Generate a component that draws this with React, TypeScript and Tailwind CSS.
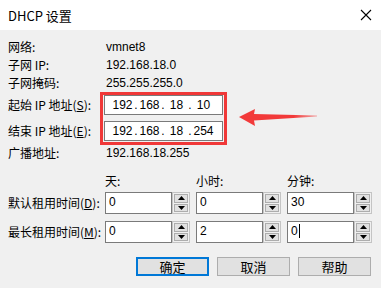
import React from "react";

const cjk = { fontFamily: '"Microsoft YaHei UI", "Noto Sans CJK SC", sans-serif' };
const num = { fontFamily: '"Liberation Sans", Arial, sans-serif' };

function Label({ children, h, className = "" }: { children: React.ReactNode; h: string; className?: string }) {
  return (
    <div className={`flex items-center ${h} ${className}`}>{children}</div>
  );
}

function IpInput({ parts }: { parts: string[] }) {
  return (
    <div className="flex h-[20px] w-[119px] items-center border border-[#7a7a7a] bg-white pl-[7px] text-[12px] text-black" style={num}>
      {parts.map((p, i) => (
        <React.Fragment key={i}>
          <span className="w-[21px] text-center">{p}</span>
          {i < parts.length - 1 && <span className="w-[6px] text-center">.</span>}
        </React.Fragment>
      ))}
    </div>
  );
}

function Spin({ value, caret = false }: { value: string; caret?: boolean }) {
  return (
    <div className="flex h-[22px] w-[85px]">
      <div className="flex h-full w-[67px] items-start border border-[#7a7a7a] bg-white pl-[3px] pt-[2px] text-[12px] leading-[14px] text-[#000]" style={num}>
        {value}
        {caret && <span className="ml-[1px] inline-block h-[14px] w-px bg-black" />}
      </div>
      <div className="flex h-full w-[18px] flex-col justify-center gap-[1px] border border-[#c4c4c4] bg-[#f0f0f0] px-[1px] py-[1px]">
        <div className="flex flex-1 items-center justify-center border border-[#adadad] bg-[#e1e1e1]">
          <svg width="7" height="4" viewBox="0 0 7 4"><path d="M0 4 L3.5 0 L7 4 Z" fill="#000" /></svg>
        </div>
        <div className="flex flex-1 items-center justify-center border border-[#adadad] bg-[#e1e1e1]">
          <svg width="7" height="4" viewBox="0 0 7 4"><path d="M0 0 L3.5 4 L7 0 Z" fill="#000" /></svg>
        </div>
      </div>
    </div>
  );
}

function Btn({ children, focus = false }: { children: React.ReactNode; focus?: boolean }) {
  return (
    <div
      className={`flex h-[19px] w-[73px] items-center justify-center bg-[#e1e1e1] text-[13px] text-black ${
        focus ? "border-2 border-[#0078d7]" : "border border-[#adadad]"
      }`}
      style={cjk}
    >
      {children}
    </div>
  );
}

export default function App() {
  return (
    <div className="relative h-[288px] w-[381px] overflow-hidden bg-[#f0f0f0] text-[12px] text-[#000]" style={cjk}>
      {/* title bar */}
      <div className="flex h-[30px] items-center justify-between bg-white pl-[8px] pr-[8px]">
        <span className="text-[13px] leading-none">DHCP 设置</span>
        <svg width="12" height="12" viewBox="0 0 12 12" className="mr-[1px]">
          <path d="M1 1 L11 11 M11 1 L1 11" stroke="#000" strokeWidth="1.1" />
        </svg>
      </div>

      <div className="flex flex-col pl-[8px] pt-[7px]">
        <div className="flex h-[19px] items-center">
          <span className="w-[98px]">网络:</span>
          <span style={num} className="text-[12px]">vmnet8</span>
        </div>
        <div className="flex h-[18px] items-center">
          <span className="w-[98px]">子网 IP:</span>
          <span style={num}>192.168.18.0</span>
        </div>
        <div className="flex h-[18px] items-center">
          <span className="w-[98px]">子网掩码:</span>
          <span style={num}>255.255.255.0</span>
        </div>

        <div className="flex">
          <div className="flex w-[92px] flex-col pt-[3px]">
            <Label h="h-[20px]">起始 IP 地址(<span className="underline">S</span>):</Label>
            <div className="h-[6px]" />
            <Label h="h-[20px]">结束 IP 地址(<span className="underline">E</span>):</Label>
          </div>
          <div className="flex h-[53px] w-[127px] flex-col gap-[6px] border-[3px] border-[#f03838] pl-[1px]">
            <IpInput parts={["192", "168", "18", "10"]} />
            <IpInput parts={["192", "168", "18", "254"]} />
          </div>
        </div>

        <div className="flex h-[15px] items-center">
          <span className="w-[98px]">广播地址:</span>
          <span style={num}>192.168.18.255</span>
        </div>

        <div className="flex h-[32px] items-center pl-[97px] pt-[10px]">
          <span className="w-[91px]">天:</span>
          <span className="w-[91px]">小时:</span>
          <span>分钟:</span>
        </div>

        <div className="flex flex-col gap-[7px]">
          <div className="flex items-center">
            <span className="w-[97px]">默认租用时间(<span className="underline">D</span>):</span>
            <div className="flex gap-[6px]">
              <Spin value="0" />
              <Spin value="0" />
              <Spin value="30" />
            </div>
          </div>
          <div className="flex items-center">
            <span className="w-[97px]">最长租用时间(<span className="underline">M</span>):</span>
            <div className="flex gap-[6px]">
              <Spin value="0" />
              <Spin value="2" />
              <Spin value="0" caret />
            </div>
          </div>
        </div>

        <div className="flex gap-[8px] pl-[128px] pt-[14px]">
          <Btn focus>确定</Btn>
          <Btn>取消</Btn>
          <Btn>帮助</Btn>
        </div>
      </div>

      {/* red arrow annotation */}
      <svg className="absolute left-[239px] top-[108px]" width="80" height="20" viewBox="0 0 80 20">
        <defs>
          <linearGradient id="g" x1="0" x2="1" y1="0" y2="0">
            <stop offset="0.7" stopColor="#f23a3a" />
            <stop offset="1" stopColor="#f23a3a" stopOpacity="0.4" />
          </linearGradient>
        </defs>
        <path d="M0 9 L16 1 L15 6 L78 7.5 L78 8.5 L15 12.5 L16 18 Z" fill="url(#g)" />
      </svg>
    </div>
  );
}
